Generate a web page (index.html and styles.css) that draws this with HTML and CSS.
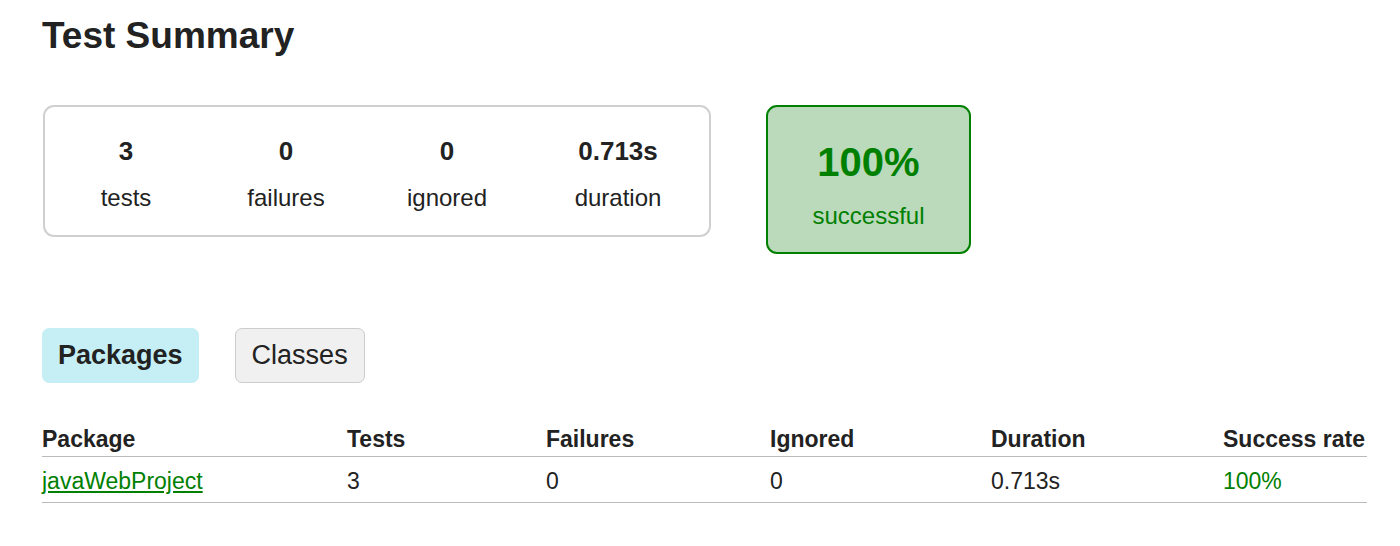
FILE: index.html
```html
<!DOCTYPE html>
<html>
<head>
<meta charset="utf-8">
<title>Test results - Test Summary</title>
<link rel="stylesheet" href="styles.css">
</head>
<body>
<div class="page">
  <h1 class="title">Test Summary</h1>
  <div class="summary">
    <div class="counters">
      <div class="counter c1"><div class="num">3</div><div class="label">tests</div></div>
      <div class="counter c2"><div class="num">0</div><div class="label">failures</div></div>
      <div class="counter c3"><div class="num">0</div><div class="label">ignored</div></div>
      <div class="counter c4"><div class="num">0.713s</div><div class="label">duration</div></div>
    </div>
    <div class="success-box">
      <div class="pct">100%</div>
      <div class="pct-label">successful</div>
    </div>
  </div>
  <div class="tabs">
    <div class="tab active">Packages</div>
    <div class="tab">Classes</div>
  </div>
  <table class="results">
    <thead>
      <tr>
        <th class="col-pkg">Package</th>
        <th class="col-tests">Tests</th>
        <th class="col-fail">Failures</th>
        <th class="col-ign">Ignored</th>
        <th class="col-dur">Duration</th>
        <th class="col-rate">Success rate</th>
      </tr>
    </thead>
    <tbody>
      <tr>
        <td><a href="#" class="pkg-link">javaWebProject</a></td>
        <td>3</td>
        <td>0</td>
        <td>0</td>
        <td>0.713s</td>
        <td class="ok">100%</td>
      </tr>
    </tbody>
  </table>
</div>
</body>
</html>
```
FILE: styles.css
```css
html, body {
  margin: 0;
  padding: 0;
  background: #ffffff;
}
body {
  font-family: "Liberation Sans", Arial, Helvetica, sans-serif;
  color: #222222;
}
.page {
  padding: 0 34px 0 42px;
}
.title {
  margin: 16px 0 0 0;
  font-size: 37px;
  line-height: 40px;
  font-weight: bold;
  color: #222222;
}
.summary {
  display: flex;
  align-items: flex-start;
  margin-top: 49px;
}
.counters {
  box-sizing: border-box;
  display: flex;
  width: 668px;
  height: 132px;
  margin-left: 1px;
  border: 2px solid #d0d0d0;
  border-radius: 11px;
  padding: 29px 0 0 21px;
}
.counter {
  text-align: center;
}
.c1 { width: 120px; }
.c2 { width: 120px; margin-left: 40px; }
.c3 { width: 120px; margin-left: 41px; }
.c4 { width: 140px; margin-left: 41px; }
.num {
  font-size: 26px;
  line-height: 30px;
  font-weight: bold;
}
.label {
  margin-top: 17px;
  font-size: 24px;
  line-height: 30px;
}
.success-box {
  box-sizing: border-box;
  width: 205px;
  height: 149px;
  margin-left: 55px;
  border: 2px solid #008000;
  border-radius: 11px;
  background: #bbd9bb;
  color: #008000;
  text-align: center;
  padding-top: 32px;
}
.pct {
  font-size: 40px;
  line-height: 46px;
  font-weight: bold;
}
.pct-label {
  margin-top: 16px;
  font-size: 24px;
  line-height: 30px;
}
.tabs {
  display: flex;
  gap: 36px;
  margin-top: 74px;
}
.tab {
  box-sizing: border-box;
  height: 55px;
  line-height: 53px;
  padding: 0 16px;
  font-size: 27px;
  border: 1px solid #cccccc;
  border-radius: 7px;
  background: #f0f0f0;
  color: #222222;
}
.tab.active {
  padding: 0 15px;
  border-color: #c5eff4;
  background: #c5eff4;
  font-weight: bold;
}
.results {
  margin-top: 41px;
  width: 1325px;
  border-collapse: collapse;
  font-size: 23px;
  line-height: 30px;
}
.results th {
  text-align: left;
  font-weight: bold;
  padding: 0 0 2px 0;
  border-bottom: 1px solid #bbbbbb;
}
.results td {
  text-align: left;
  padding: 9px 0 6px 0;
  border-bottom: 1px solid #bbbbbb;
}
.col-pkg { width: 305px; }
.col-tests { width: 199px; }
.col-fail { width: 224px; }
.col-ign { width: 221px; }
.col-dur { width: 232px; }
.pkg-link {
  color: #008000;
  text-decoration: underline;
}
.ok {
  color: #008000;
}
```
